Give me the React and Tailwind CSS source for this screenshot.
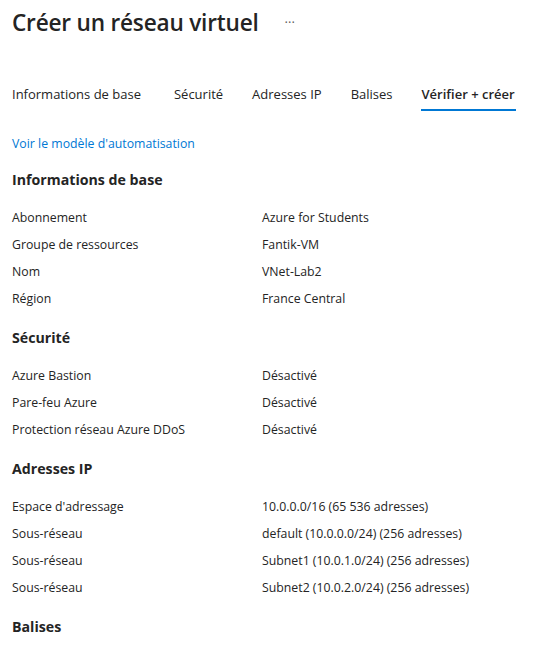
import React from "react";

const sections = [
    {
        title: "Informations de base",
        rows: [
            ["Abonnement", "Azure for Students"],
            ["Groupe de ressources", "Fantik-VM"],
            ["Nom", "VNet-Lab2"],
            ["Région", "France Central"],
        ],
    },
    {
        title: "Sécurité",
        rows: [
            ["Azure Bastion", "Désactivé"],
            ["Pare-feu Azure", "Désactivé"],
            ["Protection réseau Azure DDoS", "Désactivé"],
        ],
    },
    {
        title: "Adresses IP",
        rows: [
            ["Espace d'adressage", "10.0.0.0/16 (65 536 adresses)"],
            ["Sous-réseau", "default (10.0.0.0/24) (256 adresses)"],
            ["Sous-réseau", "Subnet1 (10.0.1.0/24) (256 adresses)"],
            ["Sous-réseau", "Subnet2 (10.0.2.0/24) (256 adresses)"],
        ],
    },
    {
        title: "Balises",
        rows: [],
    },
];

const tabs = ["Informations de base", "Sécurité", "Adresses IP", "Balises", "Vérifier + créer"];

const App = () => {
    return (
        <div className="min-h-screen bg-white px-3 text-[#242424] text-[12.3px]" style={{ fontFamily: "'Open Sans', sans-serif" }}>
            <div className="flex items-center pt-[5px] h-[40px]">
                <h1 className="text-[22.6px] font-semibold tracking-[-0.2px]">Créer un réseau virtuel</h1>
                <span className="ml-[26px] text-[#605e5c] text-[13px] leading-none">···</span>
            </div>
            <div className="flex gap-[29px] mt-[40px] h-[36px] text-[13px]">
                {tabs.map((t, i) => (
                    <div key={t} className={"flex flex-col justify-start pt-[5px] " + (i === 0 ? "mr-[4px] " : "") + (i === tabs.length - 1 ? "font-semibold" : "")}>
                        <span className="leading-[18px]">{t}</span>
                        {i === tabs.length - 1 && <div className="mt-[6px] h-[2px] bg-[#0078d4] -mx-[1px]" />}
                    </div>
                ))}
            </div>
            <a href="#" className="block mt-[19px] text-[#0078d4] leading-[18px]">Voir le modèle d'automatisation</a>
            {sections.map((s, idx) => (
                <div key={s.title} className={idx === 0 ? "mt-[17px]" : "mt-[16px]"}>
                    <h2 className="text-[14.2px] font-bold leading-[20px]">{s.title}</h2>
                    <div className="mt-[19px] flex flex-col gap-[9px] pb-[4px]">
                        {s.rows.map(([k, v], i) => (
                            <div key={i} className="grid grid-cols-[250px_1fr] leading-[18px]">
                                <span>{k}</span>
                                <span>{v}</span>
                            </div>
                        ))}
                    </div>
                </div>
            ))}
        </div>
    );
};

export default App;
